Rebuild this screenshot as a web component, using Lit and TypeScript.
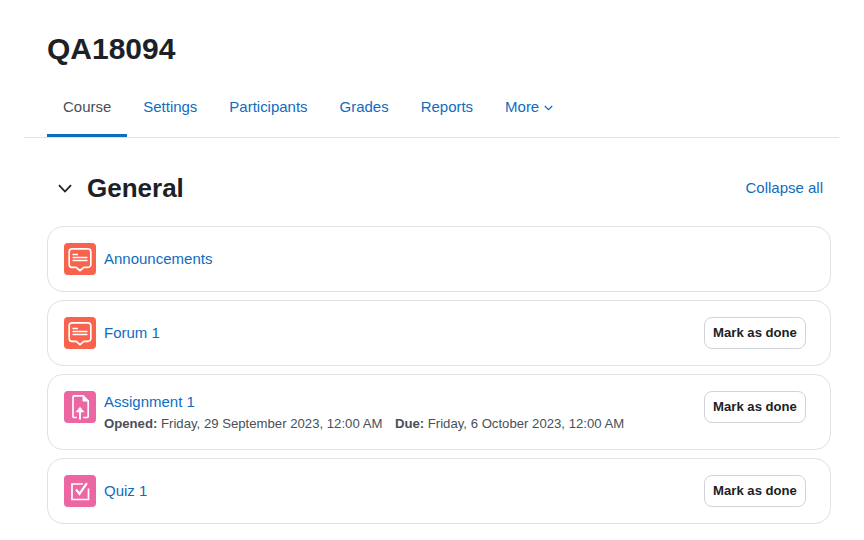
import { LitElement, html, css, svg } from "lit";
import { customElement } from "lit/decorators.js";

const forumIcon = svg`<svg class="glyph" viewBox="0 0 32 32" fill="none" stroke="#fff">
  <path d="M8 5.900h16a2.800 2.800 0 0 1 2.800 2.800v12.800a2.800 2.800 0 0 1-2.800 2.800h-4.200L16 27.700l-3.800-3.400H8a2.800 2.800 0 0 1-2.800-2.800V8.700A2.800 2.800 0 0 1 8 5.900z" stroke-width="1.700"/>
  <path d="M8.500 11.500h5.500M8.500 14.500h15M8.500 17.500h15" stroke-width="1.500"/>
</svg>`;

const assignIcon = svg`<svg class="glyph" viewBox="0 0 32 32" fill="none" stroke="#fff" stroke-width="1.700">
  <path d="M12.800 26.500H10a1 1 0 0 1-1-1V5.800a1 1 0 0 1 1-1h9.200l5 5.200v15.500a1 1 0 0 1-1 1h-4"/>
  <path d="M19 4.800V10h5.200z" fill="#fff" stroke-width="1"/>
  <path d="M16 28.500V19" stroke-width="2"/>
  <path d="M11.500 21.200 16 15.800l4.500 5.400z" fill="#fff" stroke="none"/>
</svg>`;

const quizIcon = svg`<svg class="glyph" viewBox="0 0 32 32" fill="none" stroke="#fff" stroke-width="1.700">
  <path d="M24.500 13.500V24.500H8V9H19"/>
  <path d="M12 14.500l3.500 4.300 7.400-10.600" stroke-width="2.200"/>
</svg>`;

@customElement("app-root")
export class AppRoot extends LitElement {
  static styles = css`
    :host {
      display: block;
      background: #fff;
      color: #1d2125;
      font-family: "Liberation Sans", Arial, sans-serif;
      font-size: 15px;
      line-height: 22.5px;
      height: 540px;
      overflow: hidden;
    }
    a { color: #0f6cbf; text-decoration: none; }
    .head { padding: 31px 0 0 47px; }
    h1 { margin: 0; font-size: 30px; line-height: 36px; font-weight: 700; }
    .tabs {
      display: flex;
      margin: 9px 25px 0 24px;
      padding-left: 23px;
      border-bottom: 1px solid #dee2e6;
      height: 61px;
      font-size: 14.980px;
    }
    .tab {
      display: flex;
      align-items: center;
      gap: 5px;
      padding: 2px 16px 0;
      height: 61px;
      box-sizing: border-box;
    }
    .tab.active { color: #495057; border-bottom: 3px solid #0f6cbf; padding-top: 5px; }
    .tab svg { width: 9px; height: 6px; margin-top: 1px; }
    .section { padding: 0 33px 0 47px; }
    .sec-head {
      display: flex;
      align-items: center;
      justify-content: space-between;
      height: 76px;
      padding: 12px 8px 0 0;
    }
    .sec-title { display: flex; align-items: center; gap: 15px; padding-left: 11px; }
    .sec-title svg { width: 14px; height: 9px; }
    h2 { margin: 0; font-size: 26px; line-height: 31px; font-weight: 700; }
    .list { display: flex; flex-direction: column; gap: 8px; }
    .card {
      display: flex;
      align-items: flex-start;
      gap: 8px;
      padding: 16px;
      border: 1px solid #dee2e6;
      border-radius: 16px;
      background: #fff;
    }
    .icon {
      width: 32px;
      height: 32px;
      border-radius: 4px;
      flex: none;
      display: flex;
    }
    .icon.comm { background: #f7634d; }
    .icon.assess { background: #eb66a2; }
    .glyph { width: 32px; height: 32px; display: block; }
    .body { flex: 1; min-width: 0; }
    .title { display: block; line-height: 32px; }
    .two .title { line-height: 22px; }
    .dates {
      display: flex;
      margin: 1px 0 -1px;
      font-size: 13.160px;
      line-height: 20px;
      color: #495057;
      white-space: pre;
    }
    .opened { margin-right: 12.500px; }
    .btn {
      flex: none;
      box-sizing: border-box;
      width: 102px;
      height: 32px;
      margin-right: 8px;
      border: 1px solid #ced4da;
      border-radius: 8px;
      background: #fff;
      color: #1d2125;
      font: 700 13.125px/30px "Liberation Sans", Arial, sans-serif;
      padding: 0;
      text-align: center;
    }
  `;

  private chevron() {
    return html`<svg viewBox="0 0 9 6" fill="none" stroke="currentColor" stroke-width="1.200"><path d="M.8 1 4.500 4.700 8.200 1"/></svg>`;
  }

  render() {
    const tabs = ["Settings", "Participants", "Grades", "Reports"];
    return html`
      <div class="head"><h1>QA18094</h1></div>
      <nav class="tabs">
        <a class="tab active" href="#">Course</a>
        ${tabs.map((t) => html`<a class="tab" href="#">${t}</a>`)}
        <a class="tab" href="#">More ${this.chevron()}</a>
      </nav>
      <section class="section">
        <div class="sec-head">
          <div class="sec-title">
            <svg viewBox="0 0 14 9" fill="none" stroke="#1d2125" stroke-width="1.800"><path d="M1 1.200 7 7.500l6-6.300"/></svg>
            <h2>General</h2>
          </div>
          <a href="#">Collapse all</a>
        </div>
        <div class="list">
          <div class="card">
            <span class="icon comm">${forumIcon}</span>
            <div class="body"><a class="title" href="#">Announcements</a></div>
          </div>
          <div class="card">
            <span class="icon comm">${forumIcon}</span>
            <div class="body"><a class="title" href="#">Forum 1</a></div>
            <button class="btn">Mark as done</button>
          </div>
          <div class="card two">
            <span class="icon assess">${assignIcon}</span>
            <div class="body">
              <a class="title" href="#">Assignment 1</a>
              <div class="dates"><span class="opened"><b>Opened:</b> Friday, 29 September 2023, 12:00 AM</span><span><b>Due:</b> Friday, 6 October 2023, 12:00 AM</span></div>
            </div>
            <button class="btn">Mark as done</button>
          </div>
          <div class="card">
            <span class="icon assess">${quizIcon}</span>
            <div class="body"><a class="title" href="#">Quiz 1</a></div>
            <button class="btn">Mark as done</button>
          </div>
        </div>
      </section>
    `;
  }
}
